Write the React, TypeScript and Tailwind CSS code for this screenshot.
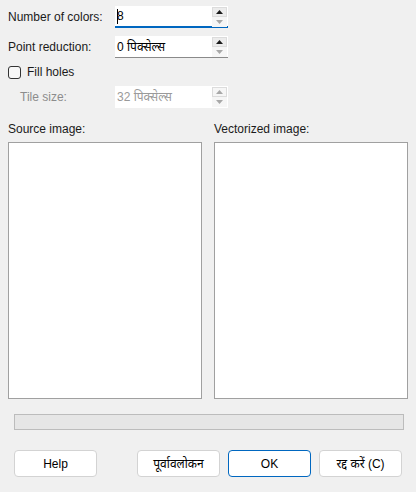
const font = "font-['Liberation_Sans','Noto_Sans','Noto_Sans_Devanagari',sans-serif]";

function Arrow({ up, disabled }: { up?: boolean; disabled?: boolean }) {
  return (
    <svg width="7" height="4" viewBox="0 0 7 4">
      <polygon
        points={up ? "0,4 7,4 3.5,0" : "0,0 7,0 3.5,4"}
        fill={disabled ? "#a8a8a8" : "#1a1a1a"}
      />
    </svg>
  );
}

function SpinBox({
  value,
  focused,
  disabled,
}: {
  value: string;
  focused?: boolean;
  disabled?: boolean;
}) {
  return (
    <div
      className={`flex h-[22px] w-[113px] items-center bg-white pl-[2px] pr-[1px] ${
        focused ? "border-b-2 border-[#0067c0]" : disabled ? "" : "border-b border-[#8a8a8a]"
      }`}
    >
      <div className={`flex flex-1 items-center ${disabled ? "text-[#9a9a9a]" : "text-black"}`}>
        {focused && <span className="mr-[-1px] h-[15px] w-px bg-black" />}
        <span>{value}</span>
      </div>
      <div className="flex flex-col gap-0 self-start pt-[1px]">
        <div
          className={`flex h-[10px] w-[15px] items-center justify-center border border-[#dcdcdc] ${
            disabled ? "bg-[#f6f6f6]" : "bg-[#ececec]"
          }`}
        >
          <Arrow up disabled={disabled} />
        </div>
        <div className="flex h-[10px] w-[15px] items-center justify-center bg-[#f6f6f6]">
          <Arrow disabled />
        </div>
      </div>
    </div>
  );
}

function Button({ label, primary }: { label: string; primary?: boolean }) {
  return (
    <div
      className={`flex h-[27px] w-[83px] items-center justify-center rounded-[4px] bg-white text-black ${
        primary ? "border border-[#0067c0]" : "border border-[#d3d3d3]"
      }`}
    >
      {label}
    </div>
  );
}

export default function App() {
  return (
    <div className={`${font} h-[492px] w-[416px] bg-[#f0f0f0] text-[12px] leading-none text-[#1a1a1a]`}>
      <div className="flex flex-col px-[8px] pt-[6px]">
        <div className="flex h-[22px] items-center">
          <span className="w-[107px]">Number of colors:</span>
          <SpinBox value="8" focused />
        </div>
        <div className="mt-[8px] flex h-[22px] items-center">
          <span className="w-[107px]">Point reduction:</span>
          <SpinBox value="0 पिक्सेल्स" />
        </div>
        <div className="mt-[6px] flex h-[16px] items-center gap-[6px]">
          <div className="h-[13px] w-[13px] rounded-[3px] border border-[#333] bg-[#f7f7f7]" />
          <span>Fill holes</span>
        </div>
        <div className="mt-[6px] flex h-[22px] items-center">
          <span className="w-[107px] pl-[12px] text-[#8c8c8c]">Tile size:</span>
          <SpinBox value="32 पिक्सेल्स" disabled />
        </div>

        <div className="mt-[14px] flex gap-[12px]">
          <div className="flex w-[194px] flex-col">
            <span className="h-[20px] pt-[1px]">Source image:</span>
            <div className="h-[257px] border border-[#a0a0a0] bg-white" />
          </div>
          <div className="flex w-[194px] flex-col">
            <span className="h-[20px] pt-[1px]">Vectorized image:</span>
            <div className="h-[257px] border border-[#a0a0a0] bg-white" />
          </div>
        </div>

        <div className="ml-[6px] mt-[15px] h-[16px] w-[390px] border border-[#bcbcbc] bg-[#e6e6e6]" />

        <div className="ml-[6px] mt-[20px] flex items-center">
          <Button label="Help" />
          <div className="ml-[40px] flex gap-[8px]">
            <Button label="पूर्वावलोकन" />
            <Button label="OK" primary />
            <Button label="रद्द करें (C)" />
          </div>
        </div>
      </div>
    </div>
  );
}
